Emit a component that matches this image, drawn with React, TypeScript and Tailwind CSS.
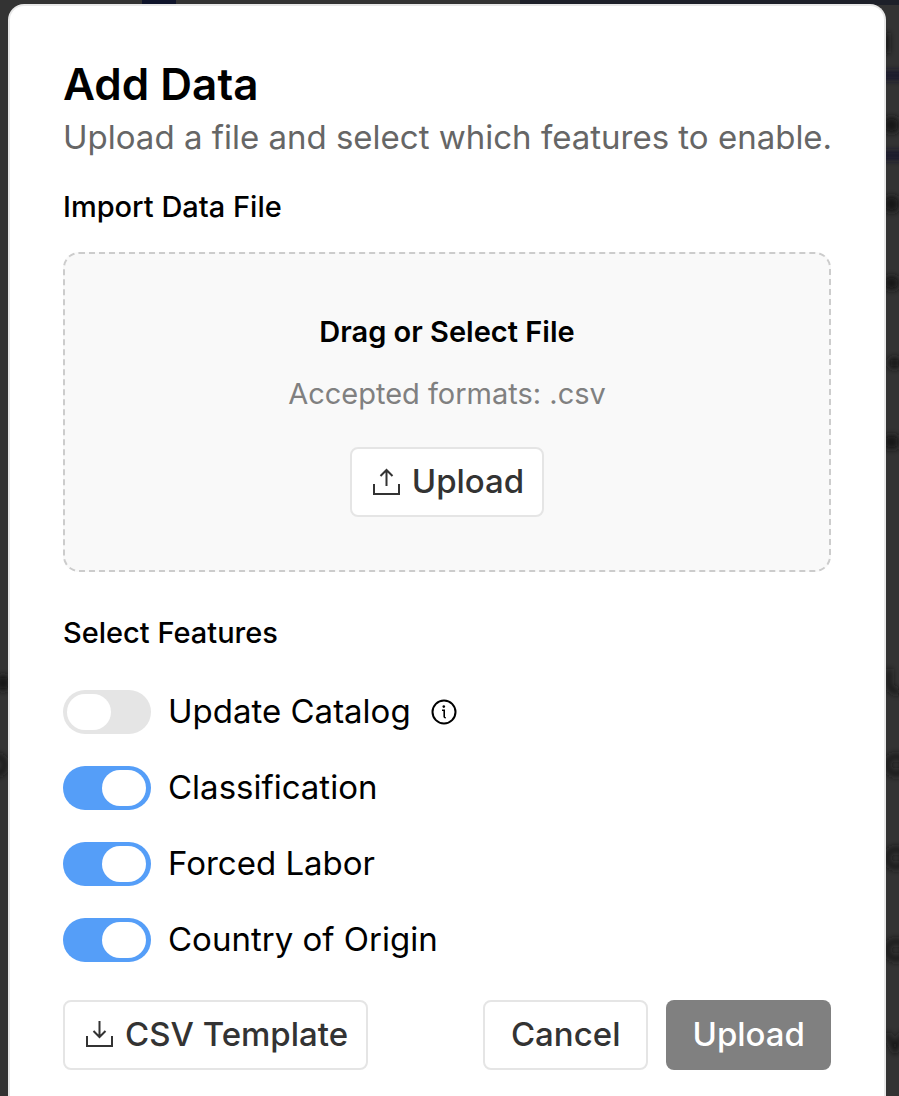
import React, { useState } from "react";

interface Feature {
    id: string;
    label: string;
    info?: boolean;
}

const FEATURES: Feature[] = [
    { id: "catalog", label: "Update Catalog", info: true },
    { id: "classification", label: "Classification" },
    { id: "labor", label: "Forced Labor" },
    { id: "origin", label: "Country of Origin" },
];

const UploadIcon = () => (
    <svg className="size-7 shrink-0" viewBox="0 0 28 28" fill="none" stroke="currentColor" strokeWidth="2" aria-hidden="true">
        <path d="M2 16V26H27V16M14.5 18V2M8.5 8L14.5 2L20.5 8" />
    </svg>
);

const DownloadIcon = () => (
    <svg className="size-7 shrink-0" viewBox="0 0 28 28" fill="none" stroke="currentColor" strokeWidth="2" aria-hidden="true">
        <path d="M2 15V25H27V15M14.5 0V16M8.5 10L14.5 16L20.5 10" />
    </svg>
);

const InfoIcon = () => (
    <svg className="size-[26px]" viewBox="0 0 26 26" fill="none" stroke="currentColor" strokeWidth="2" aria-hidden="true">
        <circle cx="13" cy="13" r="11.5" />
        <path d="M11 11.2H13.2V17.8Q13.2 18.8 14.8 18.8" strokeWidth="1.6" />
        <circle cx="12.8" cy="7.6" r="1.3" fill="currentColor" stroke="none" />
    </svg>
);

// dimmed, out of focus page behind the dialog
const Backdrop = () => (
    <svg className="pointer-events-none absolute inset-0 size-full" viewBox="0 0 899 1096" preserveAspectRatio="none" aria-hidden="true">
        <defs>
            <filter id="soft" x="-50%" y="-50%" width="200%" height="200%">
                <feGaussianBlur stdDeviation="3" />
            </filter>
        </defs>
        <rect x="142" y="-4" width="34" height="10" fill="#0f142b" />
        <rect x="520" y="-4" width="379" height="9" fill="#1d2029" />
        <g filter="url(#soft)">
            <rect x="880" y="71" width="30" height="9" fill="#14172b" />
            <rect x="880" y="151" width="30" height="9" fill="#14172b" />
            <g fill="#191919">
                <rect x="880" y="33" width="9" height="20" />
                <rect x="884" y="117" width="15" height="16" rx="5" />
                <rect x="884" y="196" width="15" height="16" rx="5" />
                <rect x="884" y="276" width="15" height="14" rx="5" />
                <rect x="888" y="357" width="13" height="12" rx="6" />
                <rect x="884" y="435" width="15" height="14" rx="4" />
                <circle cx="3" cy="683" r="8" />
            </g>
            <g fill="none" stroke="#191919" strokeWidth="5">
                <path d="M889 669V683Q889 692 900 692" />
                <circle cx="896" cy="765" r="9" />
                <circle cx="896" cy="858" r="9" />
                <circle cx="896" cy="950" r="9" />
                <path d="M887 1033L895 1050L903 1033" />
                <circle cx="-4" cy="765" r="9" />
            </g>
        </g>
    </svg>
);

const outlineButton = "flex h-[70px] items-center justify-center rounded-lg border-2 border-[#e5e5e5] bg-white text-[33px] font-medium text-[#333333]";

const AddDataDialog = () => {
    const [enabled, setEnabled] = useState<Record<string, boolean>>({
        catalog: false,
        classification: true,
        labor: true,
        origin: true,
    });

    const toggle = (id: string) => {
        setEnabled((prev) => ({ ...prev, [id]: !prev[id] }));
    };

    return (
        <div role="dialog" aria-labelledby="dialog-title" className="relative min-h-[calc(100vh-4px)] rounded-t-2xl border-2 border-b-0 border-[#e8e8e8] bg-white px-[53px] pt-[52px] pb-[26px]">
            <h1 id="dialog-title" className="text-[44px] leading-[52px] font-semibold">Add Data</h1>
            <p className="text-[33px] leading-[54px] whitespace-nowrap text-[#666666]">Upload a file and select which features to enable.</p>

            <h2 className="mt-[22px] text-[29px] leading-[42px] font-medium">Import Data File</h2>
            <div className="mt-6 flex h-80 flex-col items-center rounded-2xl border-2 border-dashed border-[#cccccc] bg-[#f9f9f9] pt-[57px]">
                <p className="text-[29px] leading-[42px] font-semibold">Drag or Select File</p>
                <p className="mt-5 text-[29px] leading-[42px] text-[#808080]">Accepted formats: .csv</p>
                <button type="button" className={`${outlineButton} mt-8 gap-3 pr-[18px] pl-5`}>
                    <UploadIcon />
                    Upload
                </button>
            </div>

            <h2 className="mt-10 text-[29px] leading-[42px] font-medium">Select Features</h2>
            <div className="mt-9 flex flex-col gap-8">
                {FEATURES.map((feature) => (
                    <div key={feature.id} className="flex h-11 items-center">
                        <label className="flex items-center gap-[17px] text-[33px] leading-[44px]">
                            <input
                                type="checkbox"
                                role="switch"
                                checked={enabled[feature.id]}
                                onChange={() => toggle(feature.id)}
                                className="h-11 w-22 shrink-0 appearance-none rounded-full bg-[#e5e5e5] p-1 before:block before:h-9 before:w-11 before:rounded-full before:bg-white checked:bg-[#559ef8] checked:before:ml-[35px]"
                            />
                            <span className="pb-[3px]">{feature.label}</span>
                        </label>
                        {feature.info && (
                            <button type="button" aria-label="About Update Catalog" className="ml-5">
                                <InfoIcon />
                            </button>
                        )}
                    </div>
                ))}
            </div>

            <div className="mt-[38px] flex items-center gap-[18px]">
                <button type="button" className={`${outlineButton} mr-auto gap-3 pr-[18px] pl-5`}>
                    <DownloadIcon />
                    CSV Template
                </button>
                <button type="button" className={`${outlineButton} px-[26px]`}>Cancel</button>
                <button type="button" className="h-[70px] rounded-lg bg-[#808080] px-[26px] text-[33px] font-medium text-white">Upload</button>
            </div>
        </div>
    );
};

const App = () => {
    return (
        <div className="relative min-h-screen overflow-hidden bg-[#333333] pt-1 pr-[13px] pl-2 font-['Inter',sans-serif] text-black">
            <Backdrop />
            <AddDataDialog />
        </div>
    );
};

export default App;
